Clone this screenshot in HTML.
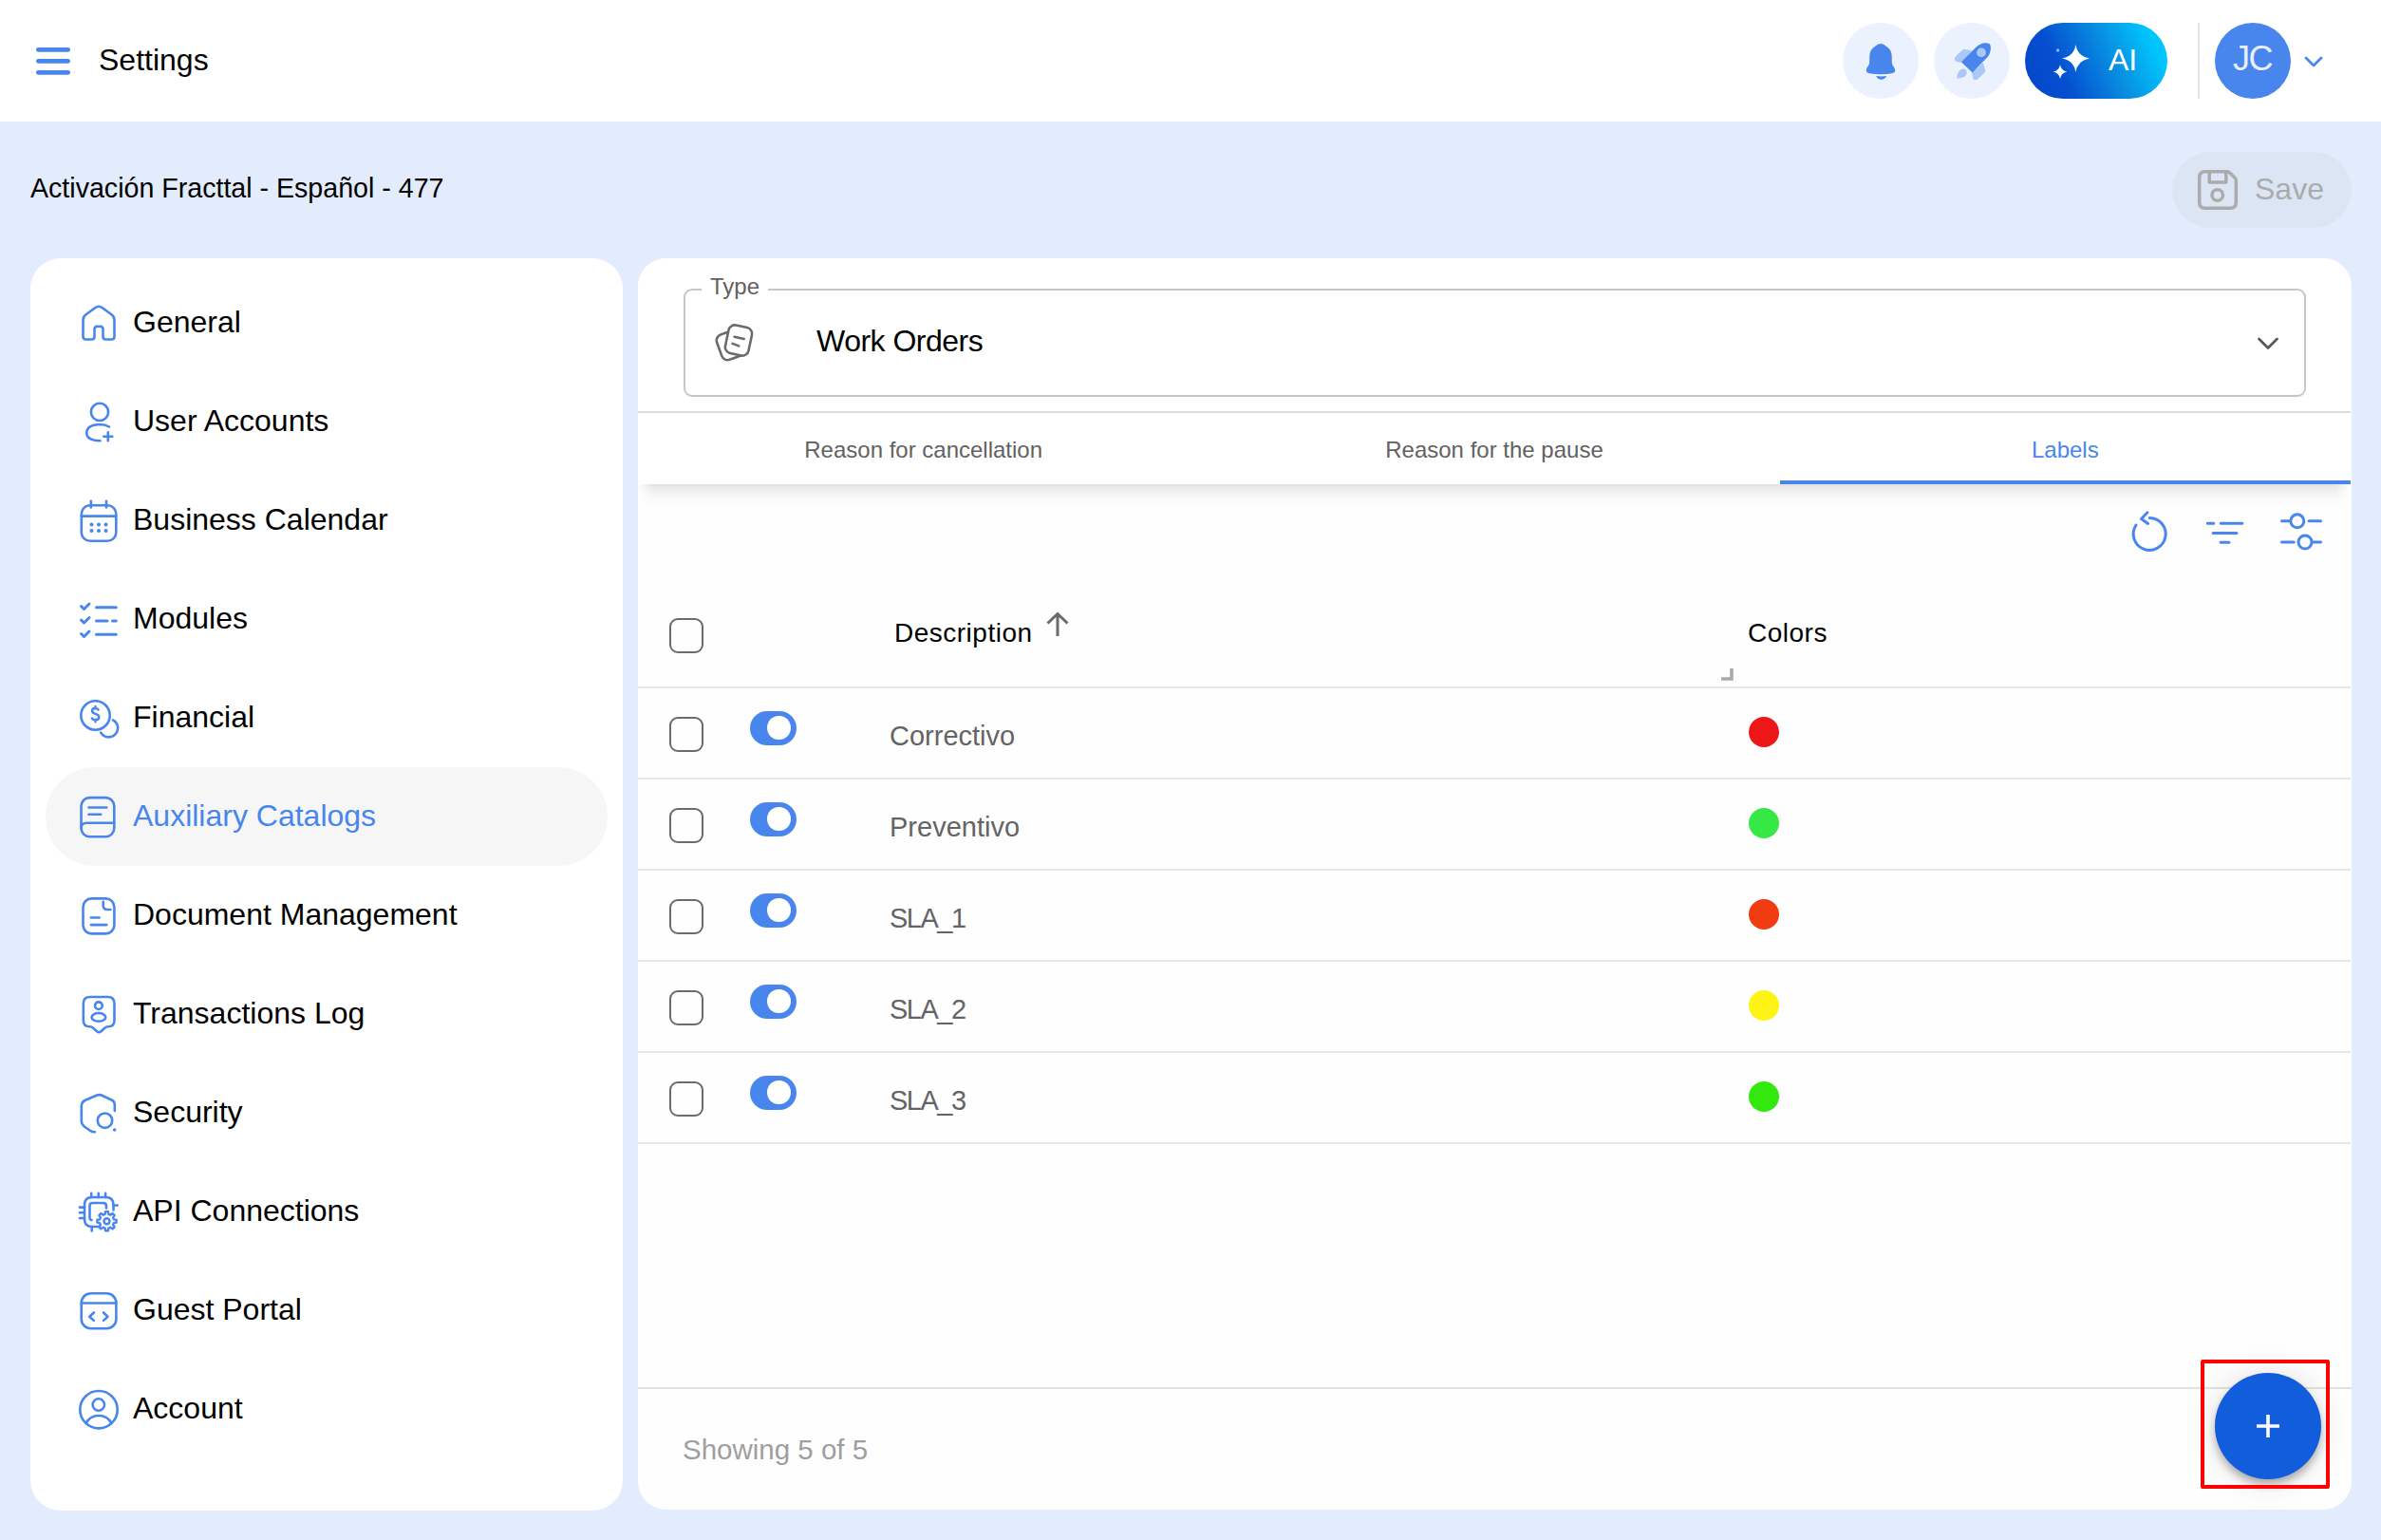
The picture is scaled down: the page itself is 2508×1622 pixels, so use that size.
<!DOCTYPE html>
<html>
<head>
<meta charset="utf-8">
<style>
*{box-sizing:border-box;margin:0;padding:0}
html,body{width:2508px;height:1622px;overflow:hidden}
body{background:#e3ecfc;font-family:"Liberation Sans",sans-serif;position:relative;color:#000}
.abs{position:absolute}
svg.abs{overflow:visible}
.t{position:absolute;white-space:nowrap;line-height:1}
</style>
</head>
<body>
<div class="abs" style="left:0;top:0;width:2508px;height:128px;background:#fff"></div>
<svg class="abs" style="left:38px;top:50px" width="36" height="29" viewBox="0 0 36 29">
<g stroke="#4886ee" stroke-width="4.8" stroke-linecap="round"><line x1="2.4" y1="2.4" x2="33.6" y2="2.4"/><line x1="2.4" y1="14.4" x2="33.6" y2="14.4"/><line x1="2.4" y1="26.4" x2="33.6" y2="26.4"/></g></svg>
<div class="t" style="left:104px;top:47.11px;font-size:32px;color:#000;">Settings</div>
<div class="abs" style="left:1941px;top:24px;width:80px;height:80px;border-radius:50%;background:#ebf2fe"></div>
<svg class="abs" style="left:1941px;top:24px" width="80" height="80" viewBox="0 0 80 80">
<path d="M40 21.9 Q36.5 21.9 34.5 24.5 Q28.5 28 28.3 35 L28.2 41.5 Q28 44 26.5 46 Q24.7 48.5 24.7 50 Q24.7 52.5 28 53.3 Q33 54.3 40 54.3 Q47 54.3 52 53.3 Q55.3 52.5 55.3 50 Q55.3 48.5 53.5 46 Q52 44 51.8 41.5 L51.7 35 Q51.5 28 45.5 24.5 Q43.5 21.9 40 21.9 Z" fill="#4886ee"/>
<path d="M35.2 56 Q40.6 56.9 46.1 56 Q44.5 59.8 40.6 59.8 Q36.8 59.8 35.2 56 Z" fill="#4886ee"/>
</svg>
<div class="abs" style="left:2037px;top:24px;width:80px;height:80px;border-radius:50%;background:#ebf2fe"></div>
<svg class="abs" style="left:2037px;top:24px" width="80" height="80" viewBox="0 0 80 80">
<path d="M31 28.3 Q35 28.6 39.5 29.9 L28.9 41.2 Q25.5 41 23.3 40.2 Q21.5 39 22.6 36.6 Z" fill="#a9c8f8" stroke="#a9c8f8" stroke-width="1" stroke-linejoin="round"/>
<path d="M51.5 42.7 Q52.5 46 53.8 50.3 Q54 51.5 53 52.5 L45.3 59.6 Q42.2 60.5 41.5 58 Q41 55 40.6 52.5 Z" fill="#a9c8f8" stroke="#a9c8f8" stroke-width="1" stroke-linejoin="round"/>
<path d="M27.5 50 Q30.5 47.5 33.5 49.3 Q35.8 52 33.8 55.5 Q31.5 58 24.3 58.5 Q24.3 53 27.5 50 Z" fill="#a9c8f8"/>
<path d="M28.9 41.2 L44.4 25.7 Q51 19.5 58 21.8 Q60.3 23 59.8 28 Q59 34.5 54.9 37.8 L40.6 52.5 Z" fill="#4886ee"/>
<circle cx="50" cy="31.4" r="4.9" fill="#a9c8f8"/>
</svg>
<div class="abs" style="left:2133px;top:24px;width:150px;height:80px;border-radius:40px;background:linear-gradient(65deg,#0446c8 0%,#054fd0 27%,#0890e2 60%,#00c4fb 86%,#00cbff 100%)"></div>
<svg class="abs" style="left:2133px;top:24px" width="150" height="80" viewBox="0 0 150 80">
<path d="M53.4 23 Q55.5 35.5 68 37.4 Q55.5 39.5 53.4 52 Q51.5 39.5 39 37.4 Q51.5 35.5 53.4 23 Z" fill="#fff"/>
<path d="M37 44.2 Q38.2 50.3 44.3 51.6 Q38.2 52.9 37 59 Q35.8 52.9 29.7 51.6 Q35.8 50.3 37 44.2 Z" fill="#fff"/>
<circle cx="34.6" cy="29" r="1.7" fill="#8fb4f0"/>
</svg>
<div class="t" style="left:2221px;top:47.01px;font-size:32px;color:#fff;">AI</div>
<div class="abs" style="left:2315px;top:24px;width:2px;height:80px;background:#e4e4e4"></div>
<div class="abs" style="left:2333px;top:24px;width:80px;height:80px;border-radius:50%;background:#4886ee"></div>
<div class="t" style="left:2352px;top:43.93px;font-size:36px;color:#e9effc;letter-spacing:-1.5px">JC</div>
<svg class="abs" style="left:2426px;top:58px" width="22" height="14" viewBox="0 0 22 14">
<polyline points="3,3 11,11 19,3" fill="none" stroke="#4886ee" stroke-width="2.8" stroke-linecap="round" stroke-linejoin="round"/></svg>
<div class="t" style="left:32px;top:183.89px;font-size:28.6px;color:#000;">Activación Fracttal - Español - 477</div>
<div class="abs" style="left:2288px;top:160px;width:189px;height:80px;border-radius:40px;background:#dce5f4"></div>
<svg class="abs" style="left:2313px;top:177px" width="46" height="46" viewBox="0 0 46 46">
<g fill="none" stroke="#ababab" stroke-width="3.5" stroke-linejoin="round">
<path d="M9.8 3.7 H33.2 Q34.5 3.7 35.5 4.7 L41.3 10.5 Q42.3 11.5 42.3 13 V36 Q42.3 42.3 36 42.3 H9.8 Q3.7 42.3 3.7 36 V10 Q3.7 3.7 9.8 3.7 Z"/>
<path d="M14.2 3.7 V15 H31.8 V3.7"/>
<circle cx="22.7" cy="28.4" r="5.75"/>
</g></svg>
<div class="t" style="left:2375px;top:183.11px;font-size:32px;color:#ababab;">Save</div>
<div class="abs" style="left:32px;top:272px;width:624px;height:1318.5px;background:#fff;border-radius:32px"></div>
<svg class="abs" style="left:80px;top:316px" width="48" height="48" viewBox="0 0 48 48"><path fill="none" stroke="#4886ee" stroke-width="2.6" stroke-linecap="round" stroke-linejoin="round" d="M7.5 21 Q7.5 17.5 10.5 15.3 L20.5 8 Q24 5.5 27.5 8 L37.5 15.3 Q40.5 17.5 40.5 21 V38.5 Q40.5 41.5 37.5 41.5 H31.5 Q28.5 41.5 28.5 38.5 V31 Q28.5 27.8 25.5 27.8 H22.5 Q19.5 27.8 19.5 31 V38.5 Q19.5 41.5 16.5 41.5 H10.5 Q7.5 41.5 7.5 38.5 Z"/></svg>
<div class="t" style="left:140px;top:322.81px;font-size:32px;color:#000;">General</div>
<svg class="abs" style="left:80px;top:420px" width="48" height="48" viewBox="0 0 48 48"><g fill="none" stroke="#4886ee" stroke-width="2.6" stroke-linecap="round" stroke-linejoin="round"><circle cx="25" cy="13.9" r="9.1"/><path d="M35 29.5 Q31 27 25 27 Q11.3 27.5 11.3 36 Q11.3 44 25.5 44.2"/><path d="M33.8 35.3 V44.3 M29.3 39.8 H38.3"/></g></svg>
<div class="t" style="left:140px;top:426.81px;font-size:32px;color:#000;">User Accounts</div>
<svg class="abs" style="left:80px;top:524px" width="48" height="48" viewBox="0 0 48 48"><g fill="none" stroke="#4886ee" stroke-width="2.6" stroke-linecap="round" stroke-linejoin="round"><rect x="5.8" y="8.2" width="36.5" height="37.5" rx="9"/><path d="M5.8 19.6 H42.3 M15.8 3.8 V10.5 M32 3.8 V10.5"/></g><g fill="#4886ee"><circle cx="16.5" cy="28.6" r="2"/><circle cx="24" cy="28.6" r="2"/><circle cx="31.5" cy="28.6" r="2"/><circle cx="16.5" cy="34.9" r="2"/><circle cx="24" cy="34.9" r="2"/><circle cx="31.5" cy="34.9" r="2"/></g></svg>
<div class="t" style="left:140px;top:530.81px;font-size:32px;color:#000;">Business Calendar</div>
<svg class="abs" style="left:80px;top:628px" width="48" height="48" viewBox="0 0 48 48"><g fill="none" stroke="#4886ee" stroke-width="3" stroke-linecap="round" stroke-linejoin="round"><path d="M5.5 10.5 L8.5 13.5 L14 8 M5.5 25 L8.5 28 L14 22.5 M5.5 39.5 L8.5 42.5 L14 37"/><path d="M21.5 11.7 H42.3 M21.5 26 H33 M38.5 26 H42.3 M21.5 40.3 H42.3"/></g></svg>
<div class="t" style="left:140px;top:634.81px;font-size:32px;color:#000;">Modules</div>
<svg class="abs" style="left:80px;top:732px" width="48" height="48" viewBox="0 0 48 48"><g fill="none" stroke="#4886ee" stroke-width="2.6" stroke-linecap="round" stroke-linejoin="round"><circle cx="20.5" cy="21.5" r="15.2"/><path d="M39 26.3 A9.6 9.6 0 1 1 26.2 39.6"/></g><path d="M23.5 15.5 Q22.5 14 20.3 14 Q17 14 17 16.8 Q17 19 20.5 19.8 Q24.3 20.6 24.3 23.3 Q24.3 26.3 20.5 26.3 Q18 26.3 16.8 24.5 M20.5 12 V14 M20.5 26.3 V28.3" fill="none" stroke="#4886ee" stroke-width="2.4" stroke-linecap="round"/></svg>
<div class="t" style="left:140px;top:738.81px;font-size:32px;color:#000;">Financial</div>
<div class="abs" style="left:48px;top:808px;width:592px;height:104px;border-radius:52px;background:#f6f6f6"></div>
<svg class="abs" style="left:80px;top:836px" width="48" height="48" viewBox="0 0 48 48"><g fill="none" stroke="#4886ee" stroke-width="2.6" stroke-linecap="round" stroke-linejoin="round"><rect x="5.5" y="4.1" width="34.8" height="41.2" rx="9"/><path d="M5.5 36 Q5.5 30.8 11.5 30.8 H40.3 M13.5 14.5 H32.3 M13.5 21.7 H26.2"/></g></svg>
<div class="t" style="left:140px;top:842.81px;font-size:32px;color:#4886ee;">Auxiliary Catalogs</div>
<svg class="abs" style="left:80px;top:940px" width="48" height="48" viewBox="0 0 48 48"><g fill="none" stroke="#4886ee" stroke-width="2.6" stroke-linecap="round" stroke-linejoin="round"><rect x="7.5" y="6.4" width="32.9" height="37" rx="9"/><path d="M28.7 9.9 V13.5 Q28.7 18 33 18 H36.4 M15.9 26.5 H24.7 M15.9 34.1 H32.3"/></g></svg>
<div class="t" style="left:140px;top:946.81px;font-size:32px;color:#000;">Document Management</div>
<svg class="abs" style="left:80px;top:1044px" width="48" height="48" viewBox="0 0 48 48"><g fill="none" stroke="#4886ee" stroke-width="2.6" stroke-linecap="round" stroke-linejoin="round"><path d="M15 6 H33.5 Q40.5 6 40.5 13 V30.5 Q40.5 37.3 34 37.3 Q32 37.3 30 39 L26.5 42.2 Q24.2 44.2 22 42.2 L18.5 39 Q16.5 37.3 14.5 37.3 Q7.8 37.3 7.8 30.5 V13 Q7.8 6 15 6 Z"/><circle cx="23.9" cy="15.2" r="3.8"/><ellipse cx="23.9" cy="27.4" rx="7.3" ry="4.4"/></g></svg>
<div class="t" style="left:140px;top:1050.81px;font-size:32px;color:#000;">Transactions Log</div>
<svg class="abs" style="left:80px;top:1148px" width="48" height="48" viewBox="0 0 48 48"><g fill="none" stroke="#4886ee" stroke-width="2.6" stroke-linecap="round" stroke-linejoin="round"><path d="M40.8 22 V15.5 Q40.8 12 37.5 10.5 L28 6 Q24.4 4.3 21 6 L10.5 10.5 Q5.8 12.5 5.8 17 V33 Q5.8 36 8.5 38.2 L15.5 43.2 Q17.5 44.5 20 44.2"/><circle cx="30.5" cy="32.2" r="7.7"/></g><circle cx="40.7" cy="42" r="1.8" fill="#4886ee"/></svg>
<div class="t" style="left:140px;top:1154.81px;font-size:32px;color:#000;">Security</div>
<svg class="abs" style="left:80px;top:1252px" width="48" height="48" viewBox="0 0 48 48"><g fill="none" stroke="#4886ee" stroke-width="2.6" stroke-linecap="round" stroke-linejoin="round"><path d="M25 40 H17 Q9 40 9 32 V17 Q9 9 17 9 H31.5 Q39.5 9 39.5 17 V22.5"/><path d="M16.5 33 Q14.5 33 14.5 30 V18 Q14.5 15 17.5 15 H28.5 Q32 15 32 18 V20.5"/><path d="M16.2 4.7 V9 M23.7 4.7 V9 M31.1 4.7 V9 M3.9 19.6 H9 M3.9 25.2 H9 M3.9 31 H9 M39.5 17.5 H43.7 M16.7 40 V44.5"/></g><path fill="#fff" stroke="#4886ee" stroke-width="2.4" stroke-linejoin="round" d="M42.60 32.76 L42.60 35.64 L39.86 36.09 L39.04 38.07 L40.66 40.32 L38.62 42.36 L36.37 40.74 L34.39 41.56 L33.94 44.30 L31.06 44.30 L30.61 41.56 L28.63 40.74 L26.38 42.36 L24.34 40.32 L25.96 38.07 L25.14 36.09 L22.40 35.64 L22.40 32.76 L25.14 32.31 L25.96 30.33 L24.34 28.08 L26.38 26.04 L28.63 27.66 L30.61 26.84 L31.06 24.10 L33.94 24.10 L34.39 26.84 L36.37 27.66 L38.62 26.04 L40.66 28.08 L39.04 30.33 L39.86 32.31 Z"/><circle cx="32.5" cy="34.2" r="3" fill="none" stroke="#4886ee" stroke-width="2.4"/></svg>
<div class="t" style="left:140px;top:1258.81px;font-size:32px;color:#000;">API Connections</div>
<svg class="abs" style="left:80px;top:1356px" width="48" height="48" viewBox="0 0 48 48"><g fill="none" stroke="#4886ee" stroke-width="2.6" stroke-linecap="round" stroke-linejoin="round"><rect x="5.7" y="6.3" width="36.7" height="36.9" rx="10"/><path d="M5.7 16.5 H42.4 M18.8 26.5 L14.3 30.7 L18.8 34.9 M29 26.5 L33.5 30.7 L29 34.9"/></g></svg>
<div class="t" style="left:140px;top:1362.81px;font-size:32px;color:#000;">Guest Portal</div>
<svg class="abs" style="left:80px;top:1460px" width="48" height="48" viewBox="0 0 48 48"><g fill="none" stroke="#4886ee" stroke-width="2.6" stroke-linecap="round" stroke-linejoin="round"><circle cx="24" cy="24.7" r="19.7"/><circle cx="23.8" cy="19.5" r="6.2"/><path d="M10.5 39 Q15 31 24 31 Q33 31 37.5 39"/></g></svg>
<div class="t" style="left:140px;top:1466.81px;font-size:32px;color:#000;">Account</div>
<div class="abs" style="left:672px;top:272px;width:1805px;height:1318px;background:#fefefe;border-radius:30px;overflow:hidden"><div class="abs" style="left:0;top:0;width:1804px;height:162px;background:#fff"></div></div>
<div class="abs" style="left:720px;top:304px;width:1709px;height:114px;border:2px solid #c6c6c6;border-radius:9px"></div>
<div class="abs" style="left:739px;top:300px;width:70px;height:8px;background:#fff"></div>
<div class="t" style="left:748px;top:290.48px;font-size:24px;color:#606060;">Type</div>
<svg class="abs" style="left:748px;top:336px" width="50" height="50" viewBox="0 0 50 50">
<g stroke="#6b6b6b" stroke-width="2.6" stroke-linejoin="round" stroke-linecap="round">
<rect x="9" y="13.75" width="24" height="28" rx="6.5" fill="none" transform="rotate(-20 21 27.75)"/>
<rect x="17.5" y="7.5" width="25" height="30" rx="6.5" fill="#fff" transform="rotate(12 30 22.5)"/>
<path d="M25.6 18.7 L35.7 21 M23.6 25.9 L30.3 28.4" fill="none"/>
</g></svg>
<div class="t" style="left:860px;top:343.01px;font-size:32px;color:#000;letter-spacing:-0.5px">Work Orders</div>
<svg class="abs" style="left:2376px;top:352px" width="26" height="20" viewBox="0 0 26 20">
<polyline points="3.5,5 13,14.5 22.5,5" fill="none" stroke="#5a5a5a" stroke-width="2.8" stroke-linecap="round" stroke-linejoin="round"/></svg>
<div class="abs" style="left:672px;top:433.3px;width:1804px;height:2px;background:#dcdcdc"></div>
<div class="abs" style="left:672px;top:435px;width:1804px;height:75px;background:#fff;border-radius:6px 6px 0 0"></div>
<div class="abs" style="left:672px;top:510px;width:1804px;height:26px;background:linear-gradient(rgba(0,0,0,0.11),rgba(0,0,0,0.075) 4px,rgba(0,0,0,0.04) 10px,rgba(0,0,0,0.015) 17px,rgba(0,0,0,0) 26px);-webkit-mask-image:linear-gradient(90deg,transparent,#000 16px,#000 calc(100% - 16px),transparent)"></div>
<div class="t" style="left:672.00px;width:601.33px;text-align:center;top:462.48px;font-size:24px;color:#616161">Reason for cancellation</div>
<div class="t" style="left:1273.33px;width:601.33px;text-align:center;top:462.48px;font-size:24px;color:#616161">Reason for the pause</div>
<div class="t" style="left:1874.67px;width:601.33px;text-align:center;top:462.48px;font-size:24px;color:#4886ee">Labels</div>
<div class="abs" style="left:1874.67px;top:506px;width:601.33px;height:4px;background:#4886ee"></div>
<svg class="abs" style="left:2230px;top:530px" width="230" height="60" viewBox="2230 530 230 60">
<g fill="none" stroke="#4886ee" stroke-width="3" stroke-linecap="round" stroke-linejoin="round">
<path d="M2250 553 A17 17 0 1 0 2264.3 545.4"/>
<path d="M2262 539.8 L2255.5 546.5 L2262.6 551.5"/>
<path d="M2325.3 551.3 H2331.8 M2339.3 551.3 H2361.8 M2331.1 561.4 H2356 M2339.1 571.3 H2348"/>
<path d="M2403.5 548.8 H2411.8 M2432 548.8 H2444.5 M2403.5 571 H2416.2 M2436 571 H2444.5"/>
<circle cx="2419.8" cy="548.8" r="7"/>
<circle cx="2428" cy="571" r="7"/>
</g></svg>
<div class="abs" style="left:705px;top:651px;width:36px;height:37px;border:2.5px solid #6b6b6b;border-radius:9px"></div>
<div class="t" style="left:942px;top:652.50px;font-size:28px;color:#000;letter-spacing:0.5px">Description</div>
<svg class="abs" style="left:1098px;top:642px" width="32" height="32" viewBox="0 0 32 32">
<path d="M16 28 V6 M5.5 14.5 L16 4.5 L26.5 14.5" fill="none" stroke="#6b6b6b" stroke-width="3"/></svg>
<div class="t" style="left:1841px;top:653.10px;font-size:28px;color:#000;letter-spacing:0.5px">Colors</div>
<svg class="abs" style="left:1812px;top:703px" width="16" height="16" viewBox="0 0 16 16"><path d="M12 1 V12 H1" fill="none" stroke="#aaaaaa" stroke-width="3.6"/></svg>
<div class="abs" style="left:672px;top:723px;width:1804px;height:2px;background:#e8e8e8"></div>
<div class="abs" style="left:705px;top:755px;width:36px;height:37px;border:2.5px solid #6b6b6b;border-radius:9px"></div>
<div class="abs" style="left:790px;top:748.6px;width:48.5px;height:36px;border-radius:18px;background:#4886ee"></div>
<div class="abs" style="left:808px;top:754.3px;width:24.5px;height:24.5px;border-radius:50%;background:#fff"></div>
<div class="t" style="left:937px;top:760.65px;font-size:29px;color:#646464;">Correctivo</div>
<div class="abs" style="left:1842px;top:754.5px;width:32px;height:32px;border-radius:50%;background:#ee1717"></div>
<div class="abs" style="left:672px;top:819px;width:1804px;height:2px;background:#e8e8e8"></div>
<div class="abs" style="left:705px;top:851px;width:36px;height:37px;border:2.5px solid #6b6b6b;border-radius:9px"></div>
<div class="abs" style="left:790px;top:844.6px;width:48.5px;height:36px;border-radius:18px;background:#4886ee"></div>
<div class="abs" style="left:808px;top:850.3px;width:24.5px;height:24.5px;border-radius:50%;background:#fff"></div>
<div class="t" style="left:937px;top:856.65px;font-size:29px;color:#646464;">Preventivo</div>
<div class="abs" style="left:1842px;top:850.5px;width:32px;height:32px;border-radius:50%;background:#36e845"></div>
<div class="abs" style="left:672px;top:915px;width:1804px;height:2px;background:#e8e8e8"></div>
<div class="abs" style="left:705px;top:947px;width:36px;height:37px;border:2.5px solid #6b6b6b;border-radius:9px"></div>
<div class="abs" style="left:790px;top:940.6px;width:48.5px;height:36px;border-radius:18px;background:#4886ee"></div>
<div class="abs" style="left:808px;top:946.3px;width:24.5px;height:24.5px;border-radius:50%;background:#fff"></div>
<div class="t" style="left:937px;top:952.65px;font-size:29px;color:#646464;letter-spacing:-1.5px">SLA_1</div>
<div class="abs" style="left:1842px;top:946.5px;width:32px;height:32px;border-radius:50%;background:#f03c10"></div>
<div class="abs" style="left:672px;top:1011px;width:1804px;height:2px;background:#e8e8e8"></div>
<div class="abs" style="left:705px;top:1043px;width:36px;height:37px;border:2.5px solid #6b6b6b;border-radius:9px"></div>
<div class="abs" style="left:790px;top:1036.6px;width:48.5px;height:36px;border-radius:18px;background:#4886ee"></div>
<div class="abs" style="left:808px;top:1042.3px;width:24.5px;height:24.5px;border-radius:50%;background:#fff"></div>
<div class="t" style="left:937px;top:1048.65px;font-size:29px;color:#646464;letter-spacing:-1.5px">SLA_2</div>
<div class="abs" style="left:1842px;top:1042.5px;width:32px;height:32px;border-radius:50%;background:#fdf315"></div>
<div class="abs" style="left:672px;top:1107px;width:1804px;height:2px;background:#e8e8e8"></div>
<div class="abs" style="left:705px;top:1139px;width:36px;height:37px;border:2.5px solid #6b6b6b;border-radius:9px"></div>
<div class="abs" style="left:790px;top:1132.6px;width:48.5px;height:36px;border-radius:18px;background:#4886ee"></div>
<div class="abs" style="left:808px;top:1138.3px;width:24.5px;height:24.5px;border-radius:50%;background:#fff"></div>
<div class="t" style="left:937px;top:1144.65px;font-size:29px;color:#646464;letter-spacing:-1.5px">SLA_3</div>
<div class="abs" style="left:1842px;top:1138.5px;width:32px;height:32px;border-radius:50%;background:#33e80d"></div>
<div class="abs" style="left:672px;top:1203px;width:1804px;height:2px;background:#e8e8e8"></div>
<div class="abs" style="left:672px;top:1460.5px;width:1805px;height:2px;background:#e2e2e2"></div>
<div class="t" style="left:719px;top:1511.53px;font-size:29.5px;color:#9e9e9e;">Showing 5 of 5</div>
<div class="abs" style="left:2333px;top:1446px;width:112px;height:112px;border-radius:50%;background:#115ddb;box-shadow:0 6px 10px rgba(0,0,0,0.14),0 1px 36px rgba(0,0,0,0.12),0 6px 10px -2px rgba(0,0,0,0.2)"></div>
<svg class="abs" style="left:2333px;top:1446px" width="112" height="112" viewBox="0 0 112 112"><path d="M56 44 V68 M44 56 H68" stroke="#fff" stroke-width="3.6"/></svg>
<div class="abs" style="left:2318px;top:1432px;width:136px;height:136px;border:4px solid #ff0000;border-radius:2px"></div>
</body>
</html>
